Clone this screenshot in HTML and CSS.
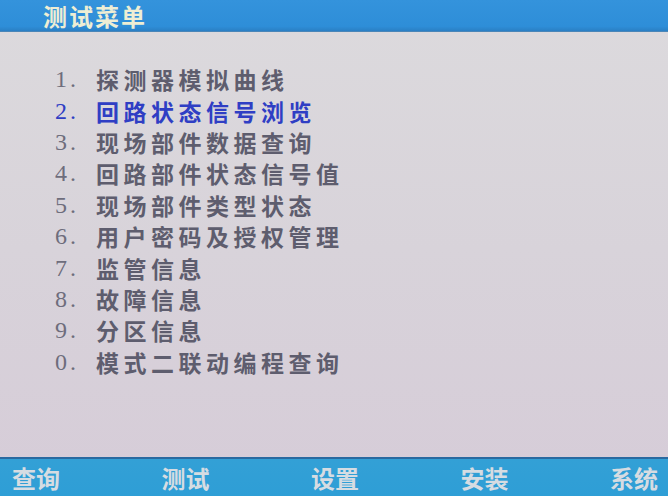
FILE: index.html
```html
<!DOCTYPE html>
<html lang="zh-CN">
<head>
<meta charset="utf-8">
<title>测试菜单</title>
<link rel="stylesheet" href="styles.css">
</head>
<body>
<div class="screen">
  <header class="title-bar"><h1 class="title">测试菜单</h1></header>
  <main class="content">
    <ol class="menu">
      <li class="item"><span class="num">1.</span><span class="label">探测器模拟曲线</span></li>
      <li class="item active"><span class="num">2.</span><span class="label">回路状态信号浏览</span></li>
      <li class="item"><span class="num">3.</span><span class="label">现场部件数据查询</span></li>
      <li class="item"><span class="num">4.</span><span class="label">回路部件状态信号值</span></li>
      <li class="item"><span class="num">5.</span><span class="label">现场部件类型状态</span></li>
      <li class="item"><span class="num">6.</span><span class="label">用户密码及授权管理</span></li>
      <li class="item"><span class="num">7.</span><span class="label">监管信息</span></li>
      <li class="item"><span class="num">8.</span><span class="label">故障信息</span></li>
      <li class="item"><span class="num">9.</span><span class="label">分区信息</span></li>
      <li class="item"><span class="num">0.</span><span class="label">模式二联动编程查询</span></li>
    </ol>
  </main>
  <footer class="tab-bar">
    <span class="tab">查询</span>
    <span class="tab">测试</span>
    <span class="tab">设置</span>
    <span class="tab">安装</span>
    <span class="tab">系统</span>
  </footer>
</div>
</body>
</html>
```
FILE: styles.css
```css
html, body {
  margin: 0;
  padding: 0;
}
body {
  width: 668px;
  height: 496px;
  overflow: hidden;
  font-family: "Noto Sans CJK SC", "Noto Sans", sans-serif;
}
.screen {
  width: 668px;
  height: 496px;
  display: flex;
  flex-direction: column;
  background: linear-gradient(180deg, #dcdadd 0%, #d8d3da 50%, #d6ccd8 100%);
}
.title-bar {
  height: 31px;
  background: linear-gradient(180deg, #3493dc 0%, #2e8ed8 85%, #2a7fc4 100%);
  border-bottom: 1px solid #4a86b8;
  display: flex;
  align-items: center;
  padding-left: 43px;
  flex: none;
}
.title {
  margin: 0;
  font-size: 24px;
  font-weight: 700;
  line-height: 31px;
  color: #eeeed4;
  letter-spacing: 2px;
}
.content {
  flex: 1;
  padding-top: 32px;
}
.menu {
  list-style: none;
  margin: 0;
  padding: 0 0 0 55px;
}
.item {
  display: flex;
  align-items: center;
  height: 31.4px;
  color: #5e5d6e;
}
.num {
  width: 41px;
  font-family: "Liberation Serif", serif;
  font-size: 24px;
  color: #6e6d7c;
  letter-spacing: 3px;
}
.label {
  font-size: 23px;
  font-weight: 700;
  letter-spacing: 4.5px;
  line-height: 1;
}
.item.active,
.item.active .num {
  color: #2f3ec4;
}
.tab-bar {
  flex: none;
  height: 37px;
  border-top: 2px solid #2a6aa0;
  background: linear-gradient(180deg, #33a0d6 0%, #2e9ed6 100%);
  display: flex;
  align-items: center;
  justify-content: space-between;
  padding: 0 10px 0 12px;
}
.tab {
  font-size: 24px;
  font-weight: 700;
  color: #d6dce2;
  line-height: 1;
}
```
